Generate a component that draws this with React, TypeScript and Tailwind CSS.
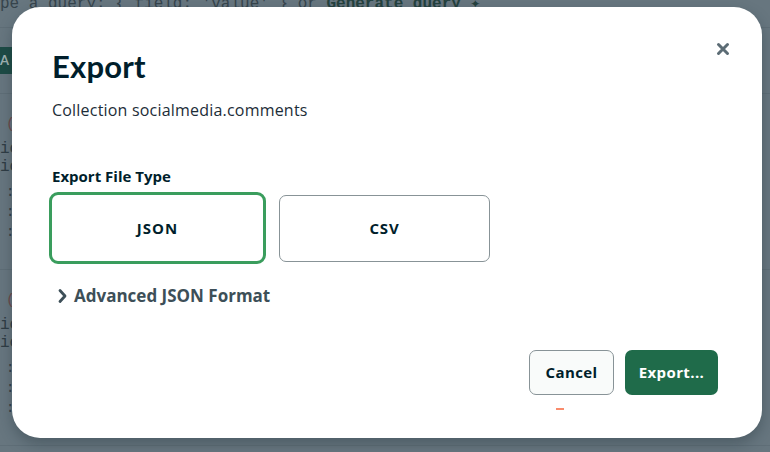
import React from "react";

function Background() {
  return (
    <div className="flex flex-col text-[#2f3c44] font-['Liberation_Mono',monospace] text-[16px]">
      <div className="h-[34px] border-b border-[#5f6e77] -mt-[6px] whitespace-nowrap leading-[20px] text-[#36444c]">
        pe a query: {"{ field: 'value' }"} or <span className="font-bold text-[#24413e]">Generate query ✦</span>
      </div>
      <div className="h-[66px] border-b border-[#5f6e77] flex items-center">
        <div className="w-[40px] h-[27px] bg-[#1d4b45] text-[#9fb1b0] font-['Lato',sans-serif] font-bold text-[13px] flex items-center">A</div>
      </div>
      <Doc />
      <Doc />
    </div>
  );
}

function Doc() {
  return (
    <div className="h-[176px] border-b border-[#5f6e77] pt-[22px] leading-[18px]">
      <div className="text-[#6e4a4a] pl-[6px] text-[15px]">(</div>
      <div className="mt-[6px]">ic</div>
      <div>ic</div>
      <div className="pl-[6px] text-[14px] mt-[6px] leading-[20px]">:</div>
      <div className="pl-[6px] text-[14px] leading-[20px]">:</div>
      <div className="pl-[6px] text-[14px] leading-[20px]">:</div>
    </div>
  );
}

function CloseIcon() {
  return (
    <svg width="14" height="14" viewBox="0 0 14 14" fill="none">
      <path d="M2.5 2.5 L11.5 11.5 M11.5 2.5 L2.5 11.5" stroke="#5c6c75" strokeWidth="3" strokeLinecap="round" />
    </svg>
  );
}

function Chevron() {
  return (
    <svg width="11" height="16" viewBox="0 0 11 16" fill="none">
      <path d="M3 2.5 L8 8 L3 13.5" stroke="#3d4f58" strokeWidth="2.8" strokeLinecap="round" strokeLinejoin="round" />
    </svg>
  );
}

export default function App() {
  return (
    <div className="relative w-[770px] h-[452px] overflow-hidden bg-[#67767f]">
      <Background />
      <div className="absolute left-[12px] top-[7px] w-[750px] h-[431px] bg-white rounded-[28px] shadow-[0_6px_14px_rgba(30,45,55,0.35)] font-['Open_Sans',sans-serif] text-[#001e2b]">
        <button className="absolute right-[30px] top-[33px] p-[2px]">
          <CloseIcon />
        </button>
        <div className="flex flex-col pl-[40px] pr-[44px] pt-[39px]">
          <h1 className="font-['Lato',sans-serif] text-[31px] font-bold leading-[40px] tracking-[0.2px]">Export</h1>
          <p className="mt-[14px] text-[16px] leading-[20px] tracking-[0.2px] text-[#1c2d38]">Collection socialmedia.comments</p>
          <div className="mt-[46px] text-[15px] font-bold leading-[20px]">Export File Type</div>
          <div className="mt-[6px] -ml-[3px] flex gap-[13px] items-center">
            <div className="w-[217px] h-[72px] rounded-[9px] border-[3px] border-[#3a9d5d] flex items-center justify-center text-[15px] font-bold tracking-[1px]">
              JSON
            </div>
            <div className="w-[211px] h-[67px] rounded-[7px] border border-[#889397] flex items-center justify-center text-[15px] font-bold tracking-[0.8px]">
              CSV
            </div>
          </div>
          <div className="mt-[21px] flex items-center gap-[6px] pl-[5px] text-[#3d4f58] text-[17px] font-bold leading-[22px]">
            <Chevron />
            <span>Advanced JSON Format</span>
          </div>
          <div className="mt-[43px] flex justify-end gap-[11px]">
            <button className="w-[85px] h-[45px] rounded-[7px] border border-[#889397] bg-[#f9fbfa] text-[15px] font-bold tracking-[0.4px] text-[#001e2b]">
              Cancel
            </button>
            <button className="w-[93px] h-[45px] rounded-[7px] bg-[#1f6b4a] text-[15px] font-bold tracking-[0.4px] text-white">
              Export...
            </button>
          </div>
          <div className="mt-[13px] ml-[504px] w-[8px] h-[2px] bg-[#f98b6c]" />
        </div>
      </div>
    </div>
  );
}
